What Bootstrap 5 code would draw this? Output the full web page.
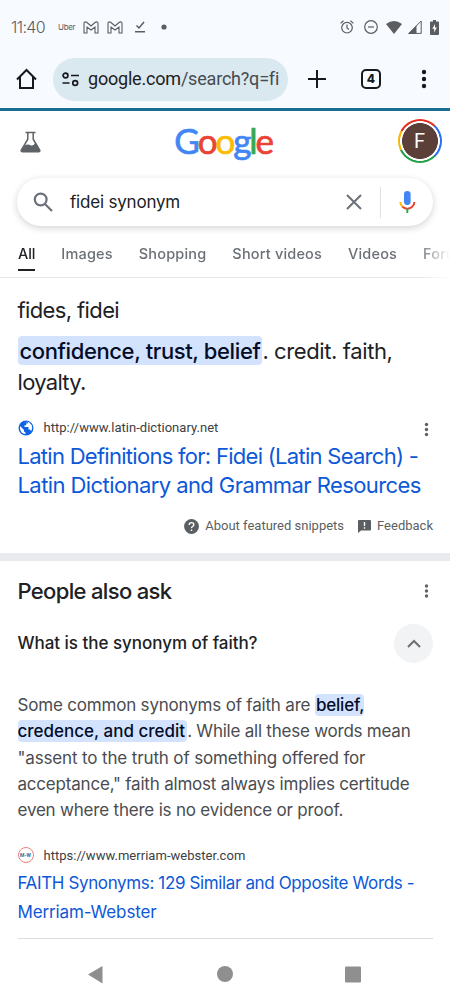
<!DOCTYPE html>
<html lang="en">
<head>
<meta charset="utf-8">
<meta name="viewport" content="width=device-width, initial-scale=1">
<title>fidei synonym - Google Search</title>
<link href="https://cdn.jsdelivr.net/npm/bootstrap@5.3.0/dist/css/bootstrap.min.css" rel="stylesheet">
<style>
body{font-family:Inter,"Open Sans",sans-serif;color:#202124;background:#fff;width:450px;height:1000px;overflow:hidden}
svg{display:block;flex:none}
.rb{font-family:Roboto,sans-serif}
.chrome{background:#f7faff;height:111px;border-bottom:3px solid #1b6c92}
.status{height:56px;color:#5b5d60;padding:0 9px 2px 11px}
.clock{font-size:16px;font-weight:300;letter-spacing:-.6px;width:47px}
.uber{font-size:8px;letter-spacing:-.3px;width:25px}
.tools{height:46px;padding-left:15px}
.omni{width:235px;height:43px;border-radius:22px;background:#dae8f0;padding-left:9px;margin-left:15px}
.omni-url{font-size:18px;margin-left:9px;color:#454b50;letter-spacing:-.2px;padding-bottom:1px}
.omni-url b{font-weight:400;color:#1d2023}
.tabcount{width:20px;height:20px;border:2px solid #17191c;border-radius:5px;font-size:12px;font-weight:800;line-height:16px;text-align:center;color:#17191c}
.brandrow{height:67px;padding:0 8.5px 5px 19px}
.logo{font-family:Lato,sans-serif;font-size:35px;line-height:44px;letter-spacing:-2.1px;width:98px;margin:0 0 4px 7px}
.logo span{-webkit-text-stroke:.7px currentColor}
.g-b{color:#4285f4}.g-r{color:#ea4335}.g-y{color:#fbbc05}.g-g{color:#34a853}
.avatar{width:44px;height:44px;border-radius:50%;margin-bottom:3px;background:radial-gradient(circle,#5a4038 0 17.6px,#fff 18.2px 19.6px,transparent 20.2px),conic-gradient(#ea2b1f 0 12%,#2b6ff0 12% 38%,#1fa045 38% 68%,#fbb500 68% 83%,#ea2b1f 83%);color:#fff;font-size:20px}
.searchbox{width:416px;height:48px;margin-left:17px;border-radius:24px;box-shadow:0 2px 7px rgba(32,33,36,.2);padding:0 17px 0 15px}
.query{font-size:17px;margin-left:16px;letter-spacing:-.2px;padding-top:1px}
.vline{width:1px;height:31px;background:#dfe1e5}
.tabs{height:52px;gap:26px;border-bottom:1px solid #e4e6e9;box-shadow:0 1px 2px rgba(0,0,0,.05);padding-left:18px;font-size:14.5px;letter-spacing:.18px;font-weight:500;color:#6b7076;white-space:nowrap;overflow:hidden;-webkit-mask-image:linear-gradient(90deg,#000 418px,transparent 450px)}
.tabs>span{height:45px;line-height:56px;flex:none}
.tabs>.on{color:#202124;border-bottom:2px solid #202124;letter-spacing:-.1px}
.pg{padding:0 17px 0 17.5px}
.ln{display:block;white-space:nowrap}
.big{font-size:22px;line-height:30px}
.ans{line-height:31px;margin-top:11px}
.hl{background:#d3e3fd;color:#040c28;font-weight:500;border-radius:4px}
.ans .hl{padding:2px 2px 1px}
.para .hl{padding:1px 2px 1px 1px}
.l1{letter-spacing:-.62px}
.l2{letter-spacing:-.39px}
.l3{letter-spacing:-.7px}
.l4{letter-spacing:-.72px}
.l5{letter-spacing:-.58px}
.l6{letter-spacing:-.66px}
.l7{letter-spacing:-.03px}
.l8{letter-spacing:-.37px}
.l9{letter-spacing:-.13px}
.p1{letter-spacing:-.19px}
.p2{letter-spacing:-.23px}
.p2 .hl{letter-spacing:0;padding-left:0}
.p3{letter-spacing:-.14px}
.p4{letter-spacing:-.2px}
.p5{letter-spacing:-.2px}
.url{font-size:13px;letter-spacing:.03px;color:#3c4043;height:20px}
.lk{color:#0d58d8;text-decoration:none;line-height:28.5px;display:block}
.foot{font-size:13px;color:#5b5f62;height:20px}
.band{height:8.5px;background:#e8eaed}
.mid{font-size:17px}
.up{width:39px;height:39px;border-radius:50%;background:#f1f3f4}
.para{line-height:26.3px;color:#4a4c50;margin-top:29px}
.mw{width:16px;height:16px;border:1px solid #ef7f7f;border-radius:50%;font-size:5px;line-height:14px;text-align:center;color:#3b6c9c;font-weight:700}
.navbtns{height:61px;padding-top:10px}
</style>
</head>
<body>
<header class="chrome">
  <div class="status d-flex align-items-center">
    <span class="clock">11:40</span><span class="uber">Uber</span>
    <svg width="16" height="13" viewBox="0 0 16 13" fill="none" stroke="#5b5d60" stroke-width="1.1"><path d="M1 12V2Q2 0 4 1.500L8 5l4-3.500Q14 0 15 2v10h-3V6L8 9 4 6v6z"/></svg>
    <svg class="ms-2" width="16" height="13" viewBox="0 0 16 13" fill="none" stroke="#5b5d60" stroke-width="1.1"><path d="M1 12V2Q2 0 4 1.500L8 5l4-3.500Q14 0 15 2v10h-3V6L8 9 4 6v6z"/></svg>
    <svg style="margin-left:12px" width="10" height="12" viewBox="0 0 10 12" fill="none" stroke="#5b5d60" stroke-width="1.500"><path d="M1.500 4.500l2.500 2.500 5-6M0 10.800h10"/></svg>
    <svg style="margin-left:16px" width="6" height="6"><circle cx="3" cy="3" r="2.600" fill="#5b5d60"/></svg>
    <div class="ms-auto d-flex align-items-center">
      <svg width="14" height="14" viewBox="0 0 14 14" fill="none" stroke="#5b5d60" stroke-width="1.200"><circle cx="7" cy="7.700" r="5.300"/><path d="M7 4.500V8l2 1.500M.6 3.400L3.500.8M13.400 3.400L10.500.8"/></svg>
      <svg style="margin-left:10px" width="14" height="14" viewBox="0 0 14 14" fill="none" stroke="#5b5d60" stroke-width="1.200"><circle cx="7" cy="7" r="6.300"/><path d="M4 7h6"/></svg>
      <svg style="margin-left:8px" width="16" height="13" viewBox="0 0 16 13"><path d="M0 3Q8-3 16 3L8 13z" fill="#5b5d60"/></svg>
      <svg style="margin-left:6px" width="14" height="14" viewBox="0 0 14 14"><path d="M.8 13.400L13.200 1v12.400z" fill="none" stroke="#5b5d60"/><path d="M0 14l8.500-8.500V14z" fill="#5b5d60"/></svg>
      <svg style="margin-left:8px" width="9" height="15" viewBox="0 0 9 15"><path d="M3 0h3v1.500h2q1 0 1 1V14q0 1-1 1H1q-1 0-1-1V2.500q0-1 1-1h2z" fill="#5b5d60"/><path d="M5 4L2.300 8.800h1.900V12.500L6.800 7.600H5z" fill="#fff"/></svg>
      <span style="width:2px"></span>
    </div>
  </div>
  <div class="tools d-flex align-items-center">
    <svg width="23" height="22" viewBox="0 0 23 22" fill="none" stroke="#17191c" stroke-width="2"><path d="M2 11.500L11.500 2 21 11.500M5 9v11h13V9"/></svg>
    <div class="omni d-flex align-items-center rb">
      <svg width="17" height="15" viewBox="0 0 17 15" fill="none" stroke="#17191c" stroke-width="1.700"><circle cx="3.500" cy="3.500" r="2.400"/><path d="M9 3.500h8M.5 11h7"/><circle cx="13.200" cy="11" r="2.400"/></svg>
      <span class="omni-url"><b>google.com</b>/search?q=fi</span>
    </div>
    <svg style="margin-left:20px" width="18" height="18" viewBox="0 0 18 18" stroke="#17191c" stroke-width="2"><path d="M9 0v18M0 9h18"/></svg>
    <div class="tabcount" style="margin-left:35px">4</div>
    <svg style="margin-left:40px" width="6" height="20" viewBox="0 0 6 20" fill="#17191c"><circle cx="3" cy="3" r="2.200"/><circle cx="3" cy="10" r="2.200"/><circle cx="3" cy="17" r="2.200"/></svg>
  </div>
</header>

<div class="brandrow d-flex align-items-center justify-content-between">
  <svg width="23" height="22" viewBox="0 0 23 22"><path d="M6.500 1.500h10M8.800 2v6.200L2.300 19q-.6 1.500.9 1.700h16.600q1.500-.2.900-1.700L14.200 8.200V2" fill="none" stroke="#5f6368" stroke-width="1.500"/><path d="M5.500 14.500q3.500-2 6.500 0 3 .5 4.500-3.500L21 19.500 20 21H3l-1-1.500z" fill="#5f6368"/></svg>
  <div class="logo d-flex"><span class="g-b">G</span><span class="g-r">o</span><span class="g-y">o</span><span class="g-b">g</span><span class="g-g">l</span><span class="g-r">e</span></div>
  <div class="avatar d-flex align-items-center justify-content-center rb">F</div>
</div>

<div class="searchbox d-flex align-items-center">
  <svg width="22" height="22" viewBox="0 0 22 22" fill="none" stroke="#6b7178" stroke-width="2.200"><circle cx="8.700" cy="8.500" r="5.900"/><path d="M13 13l7 7"/></svg>
  <span class="query">fidei synonym</span>
  <svg class="ms-auto" width="16" height="16" viewBox="0 0 16 16" stroke="#6b7178" stroke-width="2"><path d="M1 1l14 14M15 1L1 15"/></svg>
  <span class="vline" style="margin-left:18px"></span>
  <svg style="margin-left:18px" width="17" height="24" viewBox="0 0 17 24" fill="none"><rect x="5" y="1" width="6.600" height="14" rx="3.300" fill="#4285f4"/><path d="M1.300 12q.2 3 2.300 4.900" stroke="#fbbc05" stroke-width="2"/><path d="M3.400 16.700q5 4 9.800 0 2.200-2 2.200-4.700" stroke="#ea4335" stroke-width="2"/><path d="M8.300 18.600V23" stroke="#34a853" stroke-width="2"/></svg>
</div>

<nav class="tabs d-flex">
  <span class="on">All</span><span>Images</span><span>Shopping</span><span>Short videos</span><span>Videos</span><span>Forums</span>
</nav>

<section class="pg" style="height:274.5px;padding-top:17px">
  <div class="big"><span class="ln l1">fides, fidei</span></div>
  <div class="big ans"><span class="ln l2"><span class="hl">confidence, trust, belief</span>. credit. faith,</span><span class="ln l3">loyalty.</span></div>
  <div class="url rb d-flex align-items-center" style="margin-top:20px">
    <svg width="16" height="16" viewBox="0 0 16 16"><circle cx="8" cy="8" r="7.500" fill="#0f62e6"/><path d="M2 6l4 4v1.500l1.500 1V14Q2 13.500 2 8zM6 3l4-1.200-.3 1.700H8.200v1.700H6.500V7h4v2.400H12l1.200 1.900Q15 8 13.700 5L11 2.300 9 1.800z" fill="#fff"/></svg>
    <span style="margin-left:10px">http://www.latin-dictionary.net</span>
    <svg class="ms-auto" style="margin-right:4px;margin-top:3px" width="5" height="15" viewBox="0 0 5 15" fill="#5f6368"><circle cx="2.500" cy="2.500" r="1.700"/><circle cx="2.500" cy="7.500" r="1.700"/><circle cx="2.500" cy="12.500" r="1.700"/></svg>
  </div>
  <a class="lk" style="font-size:22px;margin-top:4px"><span class="ln l4">Latin Definitions for: Fidei (Latin Search) -</span><span class="ln l5">Latin Dictionary and Grammar Resources</span></a>
  <div class="foot rb d-flex align-items-center justify-content-end" style="margin-top:17px">
    <svg width="15" height="15" viewBox="0 0 15 15"><circle cx="7.500" cy="7.500" r="7.400" fill="#5b5f62"/><path d="M5.200 6q0-2.400 2.300-2.400T9.800 5.700q0 1-1.200 1.800T7.500 9.200M7.500 10.500v1.600" fill="none" stroke="#fff" stroke-width="1.400"/></svg>
    <span style="margin-left:6px">About featured snippets</span>
    <svg style="margin-left:14px" width="13" height="13" viewBox="0 0 13 13"><path d="M1 0h11q1 0 1 1v8.500q0 1-1 1H3L0 13V1q0-1 1-1z" fill="#5b5f62"/><path d="M6.500 2v4M6.500 7.200v1.600" stroke="#fff" stroke-width="1.400"/></svg>
    <span style="margin-left:6px">Feedback</span>
  </div>
</section>
<div class="band"></div>

<section class="pg">
  <div class="d-flex align-items-center justify-content-between" style="padding-top:15px">
    <span class="big l6" style="font-weight:500">People also ask</span>
    <svg style="margin-right:4px" width="5" height="15" viewBox="0 0 5 15" fill="#5f6368"><circle cx="2.500" cy="2" r="1.700"/><circle cx="2.500" cy="7" r="1.700"/><circle cx="2.500" cy="12" r="1.700"/></svg>
  </div>
  <div class="d-flex align-items-center justify-content-between" style="margin-top:18px">
    <span class="mid l7" style="font-weight:500">What is the synonym of faith?</span>
    <div class="up d-flex align-items-center justify-content-center"><svg width="14" height="9" viewBox="0 0 14 9" fill="none" stroke="#6b7075" stroke-width="2"><path d="M1 8l6-6 6 6"/></svg></div>
  </div>
  <div class="mid para">
    <span class="ln p1">Some common synonyms of faith are <span class="hl" style="padding-right:0">belief,</span></span>
    <span class="ln p2"><span class="hl">credence, and credit</span>. While all these words mean</span>
    <span class="ln p3">"assent to the truth of something offered for</span>
    <span class="ln p4">acceptance," faith almost always implies certitude</span>
    <span class="ln p5">even where there is no evidence or proof.</span>
  </div>
  <div class="url rb d-flex align-items-center" style="margin-top:22px">
    <div class="mw">M-W</div><span style="margin-left:10px">https://www.merriam-webster.com</span>
  </div>
  <a class="lk mid" style="margin-top:4px"><span class="ln l8">FAITH Synonyms: 129 Similar and Opposite Words -</span><span class="ln l9">Merriam-Webster</span></a>
  <div style="height:1px;background:#dadce0;margin-top:12px"></div>
</section>
<div class="navbtns d-flex">
  <svg width="450" height="50" viewBox="0 0 450 50" fill="#8f8f8f"><path d="M88 25.500L102.500 17v17.500z"/><circle cx="225" cy="25" r="8"/><rect x="345" y="17.500" width="16" height="16" rx="1"/></svg>
</div>
<script src="https://cdn.jsdelivr.net/npm/bootstrap@5.3.0/dist/js/bootstrap.bundle.min.js"></script>
</body>
</html>
